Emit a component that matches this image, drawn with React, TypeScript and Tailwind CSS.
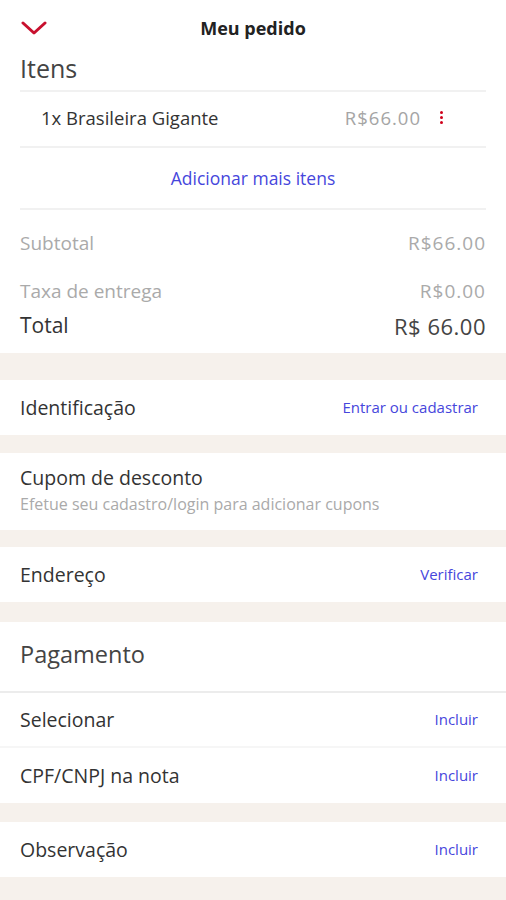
import React from 'react'

const font = { fontFamily: '"Open Sans", "Noto Sans", sans-serif' }

function Band({ h }: { h: string }) {
  return <div className={`${h} bg-[#f6f1ec]`} />
}

function LinkRow({ label, action, h = 'h-[55px]' }: { label: string; action: string; h?: string }) {
  return (
    <div className={`flex ${h} items-center justify-between bg-white pl-5 pr-7`}>
      <span className="text-[19.5px] text-[#333]">{label}</span>
      <span className="text-[15px] text-[#4646dc]">{action}</span>
    </div>
  )
}

export default function App() {
  return (
    <div className="min-h-[900px] w-[506px] bg-white" style={font}>
      {/* Header */}
      <div className="relative flex h-[48px] items-center justify-center pt-[8px]">
        <svg className="absolute left-[21px] top-[21px]" width="26" height="14" viewBox="0 0 26 14">
          <path d="M2 2 L13 12 L24 2" fill="none" stroke="#c8102e" strokeWidth="3" strokeLinecap="round" strokeLinejoin="round" />
        </svg>
        <span className="text-[18px] font-bold text-[#222]">Meu pedido</span>
      </div>

      {/* Itens */}
      <div className="px-5">
        <div className="flex h-[42px] items-center text-[25px] text-[#444]">Itens</div>
        <div className="border-t-2 border-[#f1f1f1]" />
        <div className="flex h-[56px] items-center border-b-2 border-[#f1f1f1] pb-[3px] pl-[21px]">
          <span className="flex-1 text-[18.5px] text-[#333]">1x Brasileira Gigante</span>
          <span className="text-[18.5px] tracking-[1px] text-[#a5a5a5]">R$66.00</span>
          <span className="ml-[19px] mr-[43px] flex flex-col gap-[2px]">
            <span className="h-[3px] w-[3px] rounded-full bg-[#d0021b]" />
            <span className="h-[3px] w-[3px] rounded-full bg-[#d0021b]" />
            <span className="h-[3px] w-[3px] rounded-full bg-[#d0021b]" />
          </span>
        </div>
        <div className="flex h-[62px] items-center justify-center border-b-2 border-[#f1f1f1]">
          <span className="text-[17.5px] text-[#4646dc]">Adicionar mais itens</span>
        </div>

        <div className="flex h-[66px] items-center justify-between text-[19px] text-[#aaa]">
          <span>Subtotal</span>
          <span className="tracking-[1px]">R$66.00</span>
        </div>
        <div className="flex h-[30px] items-center justify-between text-[19px] text-[#aaa]">
          <span>Taxa de entrega</span>
          <span className="tracking-[1px]">R$0.00</span>
        </div>
        <div className="flex h-[47px] items-center justify-between pb-[7px]">
          <span className="text-[21px] text-[#333]">Total</span>
          <span className="text-[22px] tracking-[0.5px] text-[#444]">R$ 66.00</span>
        </div>
      </div>

      <Band h="h-[27px]" />
      <LinkRow label="Identificação" action="Entrar ou cadastrar" />
      <Band h="h-[18px]" />
      <div className="flex h-[77px] flex-col justify-center bg-white px-5 pb-[2px]">
        <span className="text-[19.5px] leading-[26px] text-[#333]">Cupom de desconto</span>
        <span className="text-[16px] leading-[26px] text-[#aaa]">Efetue seu cadastro/login para adicionar cupons</span>
      </div>
      <Band h="h-[17px]" />
      <LinkRow label="Endereço" action="Verificar" />
      <Band h="h-[20px]" />
      <div className="flex h-[71px] items-center border-b-2 border-[#ececec] bg-white px-5 pb-[4px]">
        <span className="text-[23.5px] text-[#444]">Pagamento</span>
      </div>
      <div className="border-b-2 border-[#f6f6f6]">
        <LinkRow label="Selecionar" action="Incluir" h="h-[53px]" />
      </div>
      <LinkRow label="CPF/CNPJ na nota" action="Incluir" />
      <Band h="h-[19px]" />
      <LinkRow label="Observação" action="Incluir" />
      <Band h="h-[30px]" />
    </div>
  )
}
